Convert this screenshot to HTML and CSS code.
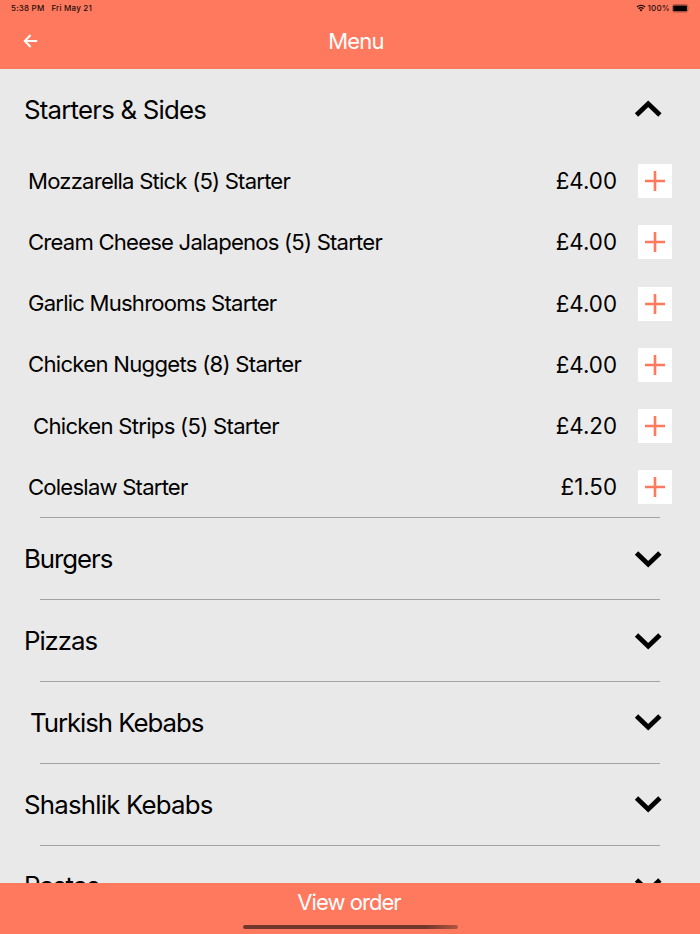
FILE: index.html
```html
<!DOCTYPE html>
<html lang="en">
<head>
  <meta charset="utf-8">
  <title>Menu</title>
  <link rel="stylesheet" href="styles.css">
</head>
<body>
  <svg class="icon-defs" aria-hidden="true">
    <symbol id="chevron" viewBox="0 0 28 18">
      <path d="M2.5 2.9 L14.2 14.2 L25.9 2.9" fill="none" stroke="#000" stroke-width="4.8"/>
    </symbol>
    <symbol id="plus" viewBox="0 0 20 20">
      <path d="M10 0 V20 M0 10 H20" fill="none" stroke="#ff795f" stroke-width="2.6"/>
    </symbol>
  </svg>

  <header class="header">
    <div class="status-bar">
      <div class="status-left"><span>5:38 PM</span><span>Fri May 21</span></div>
      <div class="status-right">
        <svg class="wifi" viewBox="0 0 10 8">
          <path d="M0.9 3 A6 6 0 0 1 9.1 3 M2.5 4.8 A3.6 3.6 0 0 1 7.5 4.8" fill="none" stroke="#1c0d0a" stroke-width="1.3"/>
          <path d="M5 7.6 L3.5 6.1 A2.1 2.1 0 0 1 6.5 6.1 Z" fill="#1c0d0a"/>
        </svg>
        <span class="battery-label">100%</span>
        <svg class="battery" viewBox="0 0 18 9">
          <rect x="0.4" y="0.5" width="15.4" height="7.6" rx="2" fill="none" stroke="#a54e3e" stroke-width="0.8"/>
          <rect x="1.2" y="1.4" width="13.8" height="5.8" rx="1" fill="#000"/>
          <path d="M16.6 3 Q17.6 4.3 16.6 5.6 Z" fill="#a54e3e"/>
        </svg>
      </div>
    </div>
    <div class="nav-bar">
      <svg class="back" viewBox="0 0 14 14">
        <path d="M13.7 7 H1.5 M7.1 1 L1.2 7 L7.1 13" fill="none" stroke="#fff" stroke-width="1.9"/>
      </svg>
      <h1 class="title">Menu</h1>
    </div>
  </header>

  <main class="menu">
    <section class="category">
      <div class="category-header"><h2 class="starters">Starters &amp; Sides</h2><svg class="chevron open"><use href="#chevron"/></svg></div>
      <div class="item"><span class="name">Mozzarella Stick (5) Starter</span><span class="price">£4.00</span><button class="add"><svg><use href="#plus"/></svg></button></div>
      <div class="item"><span class="name">Cream Cheese Jalapenos (5) Starter</span><span class="price">£4.00</span><button class="add"><svg><use href="#plus"/></svg></button></div>
      <div class="item"><span class="name">Garlic Mushrooms Starter</span><span class="price">£4.00</span><button class="add"><svg><use href="#plus"/></svg></button></div>
      <div class="item"><span class="name chicken">Chicken Nuggets (8) Starter</span><span class="price">£4.00</span><button class="add"><svg><use href="#plus"/></svg></button></div>
      <div class="item"><span class="name chicken indent">Chicken Strips (5) Starter</span><span class="price">£4.20</span><button class="add"><svg><use href="#plus"/></svg></button></div>
      <div class="item"><span class="name">Coleslaw Starter</span><span class="price">£1.50</span><button class="add"><svg><use href="#plus"/></svg></button></div>
    </section>
    <section class="category">
      <div class="category-header"><h2>Burgers</h2><svg class="chevron"><use href="#chevron"/></svg></div>
    </section>
    <section class="category">
      <div class="category-header"><h2>Pizzas</h2><svg class="chevron"><use href="#chevron"/></svg></div>
    </section>
    <section class="category">
      <div class="category-header"><h2 class="indent">Turkish Kebabs</h2><svg class="chevron"><use href="#chevron"/></svg></div>
    </section>
    <section class="category">
      <div class="category-header"><h2 class="shashlik">Shashlik Kebabs</h2><svg class="chevron"><use href="#chevron"/></svg></div>
    </section>
    <section class="category">
      <div class="category-header"><h2>Pastas</h2><svg class="chevron"><use href="#chevron"/></svg></div>
    </section>
  </main>

  <footer class="footer">
    <div class="view-order">View order</div>
    <div class="home-indicator"></div>
  </footer>
</body>
</html>
```

FILE: styles.css
```css
* {
  margin: 0;
  padding: 0;
  box-sizing: border-box;
}

body {
  height: 100vh;
  overflow: hidden;
  display: flex;
  flex-direction: column;
  background: #e9e9e9;
  color: #000;
  font-family: Inter, "Liberation Sans", sans-serif;
}

.icon-defs {
  display: none;
}

.header {
  flex: none;
  height: 68.6px;
  background: #ff795f;
}

.status-bar {
  height: 16px;
  padding: 0 11px;
  display: flex;
  align-items: center;
  justify-content: space-between;
  font-size: 8px;
  font-weight: 500;
  color: #1c0d0a;
}

.status-left {
  display: flex;
  gap: 7px;
  letter-spacing: 0.2px;
}

.status-right {
  display: flex;
  align-items: center;
}

.battery-label {
  letter-spacing: 0.2px;
}

.wifi {
  width: 10px;
  height: 8px;
  margin-right: 2px;
}

.battery {
  width: 18px;
  height: 9px;
  margin-left: 2px;
  margin-right: -1px;
}

.nav-bar {
  height: 50px;
  padding: 0 12px 0 23px;
  display: grid;
  grid-template-columns: 15px 1fr;
  align-items: center;
}

.back {
  width: 15px;
  height: 14px;
}

.title {
  padding-right: 14px;
  font-size: 22px;
  font-weight: 400;
  letter-spacing: -0.85px;
  text-align: center;
  color: #fff;
}

.menu {
  flex: 1;
  min-height: 0;
  overflow: hidden;
}

.category + .category::before {
  content: "";
  display: block;
  height: 1px;
  margin: -0.5px 40px;
  background: #a3a3a3;
}

.category-header {
  height: 81.8px;
  padding: 0 38px 0 24px;
  display: flex;
  align-items: center;
  justify-content: space-between;
}

.category-header h2 {
  font-size: 25.8px;
  font-weight: 400;
  letter-spacing: -1.05px;
}

.category-header .starters,
.category-header .shashlik {
  letter-spacing: -0.79px;
}

.category-header .indent {
  padding-left: 6px;
}

.chevron {
  width: 28px;
  height: 18px;
}

.chevron.open {
  transform: scaleY(-1);
}

.item {
  height: 61.25px;
  padding: 0 28px;
  display: flex;
  align-items: center;
}

.name {
  flex: 1;
  padding-bottom: 1px;
  font-size: 22.1px;
  letter-spacing: -0.79px;
}

.name.chicken {
  letter-spacing: -0.71px;
}

.name.indent {
  padding-left: 5px;
}

.price {
  padding-bottom: 1px;
  font-size: 22.3px;
}

.add {
  width: 34px;
  height: 34px;
  margin-left: 21px;
  border: none;
  background: #fff;
  display: flex;
  align-items: center;
  justify-content: center;
}

.add svg {
  width: 20px;
  height: 20px;
}

.footer {
  flex: none;
  height: 51.4px;
  background: #ff795f;
  display: flex;
  flex-direction: column;
  align-items: center;
}

.view-order {
  height: 38px;
  padding-right: 2px;
  line-height: 38px;
  font-size: 22px;
  letter-spacing: -0.95px;
  color: #fff;
}

.home-indicator {
  width: 215px;
  height: 4px;
  margin-top: 4px;
  border-radius: 2px;
  background: linear-gradient(to right, #70372c 85%, #b05642);
}
```
